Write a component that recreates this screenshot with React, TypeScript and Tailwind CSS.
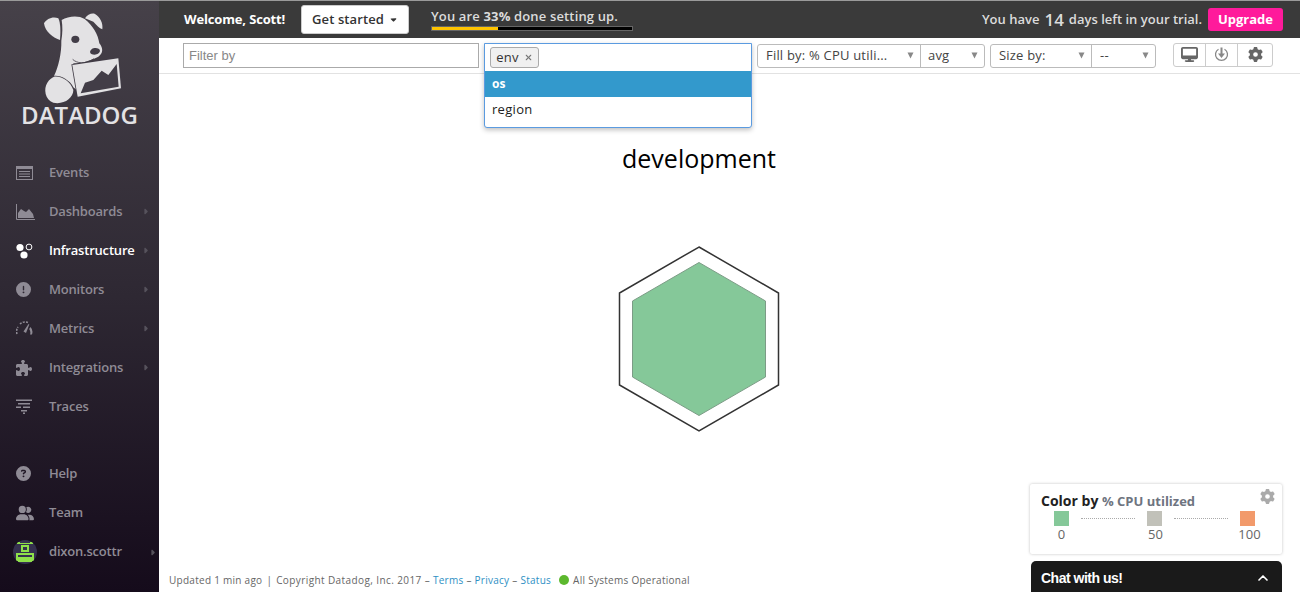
import { ChevronUp } from 'lucide-react'
import {
  FaCircleQuestion,
  FaCircleExclamation,
  FaPuzzlePiece,
  FaUserGroup,
  FaGear,
  FaDesktop,
  FaCaretRight,
  FaCaretDown,
  FaXmark,
} from 'react-icons/fa6'
import type { ReactNode } from 'react'

const sans = "font-['Open_Sans',sans-serif]"

function EventsIcon() {
  return (
    <svg width="17" height="14" viewBox="0 0 17 14">
      <rect x="0.5" y="0.5" width="16" height="13" fill="none" stroke="currentColor" />
      <rect x="0" y="0" width="17" height="3" fill="currentColor" />
      <path d="M3 5.5h11M3 8h11M3 10.5h11" stroke="currentColor" strokeWidth="1" />
    </svg>
  )
}

function DashIcon() {
  return (
    <svg width="19" height="16" viewBox="0 0 19 16">
      <path d="M0.5 0v15.5H19" fill="none" stroke="currentColor" />
      <path d="M2 14V9l3-4 3 2 2 1 3-3 4 5 1 4z" fill="currentColor" />
    </svg>
  )
}

function InfraIcon() {
  return (
    <svg width="17" height="16" viewBox="0 0 17 16">
      <circle cx="4" cy="4.5" r="3.6" fill="currentColor" />
      <circle cx="13" cy="4" r="2.9" fill="none" stroke="currentColor" />
      <circle cx="8" cy="12" r="3.6" fill="currentColor" />
    </svg>
  )
}

function MetricsIcon() {
  return (
    <svg width="17" height="15" viewBox="0 0 17 15">
      <path d="M1 13a7.5 7.5 0 0 1 1-7" fill="none" stroke="currentColor" strokeWidth="1.6" strokeDasharray="2 1.2" />
      <path d="M4 3a7.5 7.5 0 0 1 8-1.5" fill="none" stroke="currentColor" strokeWidth="1.6" strokeDasharray="2 1.2" />
      <path d="M7.500 10.500l5-7.500 0.800 0.500-3.300 8.500z" fill="currentColor" />
      <path d="M14.500 6a7.500 7.500 0 0 1 1.500 7.500h-2a6 6 0 0 0-0.800-5.500z" fill="currentColor" />
    </svg>
  )
}

function TracesIcon() {
  return (
    <svg width="16" height="15" viewBox="0 0 16 15">
      <path d="M0 0.500h16v1.500H0zM2 4h12v1.500H2z" fill="currentColor" />
      <path d="M0 7.500h5v1.500H0zM7 7.500h7v1.500H7zM5 11h6v1.500H5zM7 13.500h2V15H7z" fill="currentColor" />
    </svg>
  )
}

function Avatar() {
  return (
    <div className="w-6 h-6 rounded-full bg-[#35304f] overflow-hidden">
      <svg width="24" height="24" viewBox="0 0 24 24" shapeRendering="crispEdges">
        <path d="M4 2h3v1h10V2h3v2H4z" fill="#8fe04a" />
        <path d="M8 5h8v7H8zM3 13h18v8h-2v1H5v-1H3z" fill="#8fe04a" />
        <rect x="10" y="7" width="4" height="3" fill="#35304f" />
        <rect x="5" y="15" width="14" height="2" fill="#35304f" />
      </svg>
    </div>
  )
}

function DogLogo() {
  const bg = '#423d47'
  const fg = '#e3e2e4'
  return (
    <svg width="85" height="95" viewBox="0 0 255 285">
      {/* ear */}
      <path d="M12 40C20 25 40 18 55 25C62 40 62 65 60 90C40 85 15 65 12 40Z" fill={fg} />
      {/* right ear */}
      <path d="M135 25C142 15 155 8 165 12C180 20 190 40 187 58C178 55 170 45 160 35Z" fill={fg} />
      {/* head and body */}
      <path
        d="M65 30C85 18 115 15 134 27C158 45 175 75 178 100C190 115 190 130 175 140C155 150 130 160 100 160L100 165L110 240L100 232C90 210 60 195 42 198C55 170 65 130 64 92C68 70 68 50 65 30Z"
        fill={fg}
      />
      {/* paw */}
      <path
        d="M42 200C65 197 92 215 100 240C100 265 70 285 40 278C15 270 10 235 22 218C28 208 35 203 42 200Z"
        fill={fg}
      />
      <ellipse cx="106" cy="88" rx="12" ry="11" fill={bg} />
      <ellipse cx="165" cy="124" rx="15" ry="10" transform="rotate(-10 165 124)" fill={bg} />
      <path d="M98 148C110 160 135 164 162 146" fill="none" stroke={bg} strokeWidth="2.500" />
      {/* chart */}
      <path d="M97 165L235 145L243 235L113 260Z" fill={fg} stroke={bg} strokeWidth="5" paintOrder="stroke" />
      <path d="M122 250L135 218L160 210L185 182L205 195L230 162L236 230Z" fill={bg} />
    </svg>
  )
}

const mainNav: { label: string; icon: ReactNode; arrow?: boolean; active?: boolean }[] = [
  { label: 'Events', icon: <EventsIcon /> },
  { label: 'Dashboards', icon: <DashIcon />, arrow: true },
  { label: 'Infrastructure', icon: <InfraIcon />, arrow: true, active: true },
  { label: 'Monitors', icon: <FaCircleExclamation size={15} />, arrow: true },
  { label: 'Metrics', icon: <MetricsIcon />, arrow: true },
  { label: 'Integrations', icon: <FaPuzzlePiece size={16} />, arrow: true },
  { label: 'Traces', icon: <TracesIcon /> },
]

function NavItem({ label, icon, arrow, active }: { label: string; icon: ReactNode; arrow?: boolean; active?: boolean }) {
  return (
    <div className={`h-[39px] flex items-center ${active ? 'text-white' : 'text-[#8f8b95]'}`}>
      <div className={`w-[49px] pl-4 flex items-center ${active ? 'text-white' : 'text-[#8f8b95]'}`}>{icon}</div>
      <span className="text-[13px] font-semibold tracking-[-0.2px]">{label}</span>
      {arrow && <FaCaretRight size={9} className="ml-auto mr-[9px] text-[#56525c]" />}
    </div>
  )
}

function Sidebar() {
  return (
    <aside className={`${sans} w-[159px] shrink-0 h-full flex flex-col bg-gradient-to-b from-[#464149] via-[#2e2833] to-[#150b1b]`}>
      <div className="h-[152px] pt-[9px] shrink-0 flex flex-col">
        <div className="pl-[40px] h-[95px]">
          <DogLogo />
        </div>
        <div className="mt-[-3px] text-center text-[24px] leading-[26px] font-semibold text-[#e3e2e4]">DATADOG</div>
      </div>
      {mainNav.map((n) => (
        <NavItem key={n.label} {...n} />
      ))}
      <div className="h-[28px] shrink-0" />
      <NavItem label="Help" icon={<FaCircleQuestion size={15} />} />
      <NavItem label="Team" icon={<FaUserGroup size={18} />} />
      <div className="h-[39px] flex items-center text-[#8f8b95]">
        <div className="w-[49px] pl-[13px]">
          <Avatar />
        </div>
        <span className="text-[13px] font-semibold tracking-[-0.2px]">dixon.scottr</span>
        <FaCaretRight size={9} className="ml-auto mr-[2px] mt-[2px] text-[#56525c]" />
      </div>
    </aside>
  )
}

function TopBar() {
  return (
    <div className={`${sans} h-[37px] shrink-0 bg-[#3a3a3a] flex items-center pl-[25px] pr-[17px] text-[#dcdcdc]`}>
      <span className="text-[13px] font-bold text-white w-[117px] tracking-[-0.15px] whitespace-nowrap">Welcome, Scott!</span>
      <button className="w-[108px] h-[29px] bg-white rounded-[3px] border border-[#ccc] text-[#333] text-[13px] font-semibold flex items-center justify-center gap-[5px] tracking-[0.1px]">
        Get started
        <FaCaretDown size={9} />
      </button>
      <div className="ml-[22px] w-[202px] flex flex-col mt-[-1px]">
        <span className="text-[13px] leading-[17px] font-semibold whitespace-nowrap tracking-[0.15px]">
          You are <b className="font-bold">33%</b> done setting up.
        </span>
        <div className="h-[5px] bg-black border border-[#666] mt-[1px]">
          <div className="h-full w-[33%] bg-[#ffc400]" />
        </div>
      </div>
      <span className="ml-auto text-[13px] font-semibold whitespace-nowrap flex items-center">
        You have <b className="text-[17px] leading-[17px] font-semibold mx-[5px]">14</b> days left in your trial.
      </span>
      <button className="ml-[6px] w-[75px] h-[23px] rounded-[3px] bg-[#ff1a9b] text-white text-[13px] font-bold">Upgrade</button>
    </div>
  )
}

function SelectCaret() {
  return (
    <svg width="7" height="7" viewBox="0 0 7 7" className="shrink-0">
      <path d="M0.500 0.500h6L3.500 6.500z" fill="#888" />
    </svg>
  )
}

function SelectCell({ label, className }: { label: string; className: string }) {
  return (
    <div className={`h-full flex items-center justify-between text-[13px] tracking-[0.2px] text-[#444] ${className}`}>
      <span className="whitespace-nowrap">{label}</span>
      <SelectCaret />
    </div>
  )
}

function FilterBar() {
  return (
    <div className={`${sans} relative z-10 h-[36px] shrink-0 border-b border-[#e2e2e2] bg-white flex items-center pl-[24px]`}>
      <div className="w-[296px] h-[25px] border border-[#aaa] flex items-center px-[5px] text-[13px] text-[#888] font-['Liberation_Sans',sans-serif]">
        Filter by
      </div>
      <div className="relative ml-[5px] w-[268px] h-[25px] shrink-0">
        <div className="absolute inset-x-0 top-0 h-[85px] bg-white border border-[#5b9be0] rounded-b-[3px] shadow-[0_2px_5px_rgba(0,0,0,0.25)] flex flex-col">
          <div className="h-[27px] flex items-center pl-[5px] shrink-0">
            <div className="h-[21px] w-[49px] border border-[#aaa] bg-[#f0f0f0] rounded-[3px] flex items-center justify-center gap-[5px] text-[13px] tracking-[0.2px] text-[#333]">
              env
              <FaXmark size={9} className="text-[#777]" />
            </div>
          </div>
          <div className="h-[26px] bg-[#3399cc] text-white text-[12px] font-bold flex items-center pl-[7px] shrink-0">os</div>
          <div className="h-[26px] text-[#222] text-[13px] tracking-[0.3px] flex items-center pl-[7px] shrink-0">region</div>
        </div>
      </div>
      <div className="ml-[5px] w-[228px] h-[24px] border border-[#bbb] rounded-[3px] flex items-center shrink-0">
        <SelectCell label="Fill by: % CPU utili..." className="w-[163px] pl-[8px] pr-[6px] border-r border-[#bbb]" />
        <SelectCell label="avg" className="flex-1 pl-[7px] pr-[6px]" />
      </div>
      <div className="ml-[5px] w-[166px] h-[24px] border border-[#bbb] rounded-[3px] flex items-center shrink-0">
        <SelectCell label="Size by:" className="w-[101px] pl-[8px] pr-[6px] border-r border-[#bbb]" />
        <SelectCell label="--" className="flex-1 pl-[8px] pr-[6px]" />
      </div>
      <div className="ml-[17px] w-[100px] h-[24px] border border-[#ccc] rounded-[3px] flex items-center text-[#666] shrink-0 mt-[-2px]">
        <div className="w-[32px] h-full flex items-center justify-center border-r border-[#ccc]">
          <FaDesktop size={17} />
        </div>
        <div className="w-[32px] h-full flex items-center justify-center border-r border-[#ccc] text-[#888]">
          <svg width="15" height="15" viewBox="0 0 15 15">
            <path d="M4.500 2.200a6 6 0 1 0 6 0" fill="none" stroke="currentColor" strokeWidth="1.300" />
            <path d="M6.500 0.500h2v6h2.500l-3.500 4.500-3.500-4.500h2.500z" fill="currentColor" />
          </svg>
        </div>
        <div className="flex-1 flex items-center justify-center">
          <FaGear size={15} />
        </div>
      </div>
    </div>
  )
}

function HostMap() {
  return (
    <div className="flex-1 min-h-0 flex flex-col items-center pr-[61px]">
      <h2 className={`${sans} text-[25px] leading-[34px] mt-[67px] text-black`}>development</h2>
      <svg className="mt-[70px]" width="164" height="188" viewBox="0 0 164 188">
        <polygon points="82,2 161.500,48 161.500,140 82,186 2.500,140 2.500,48" fill="none" stroke="#333" strokeWidth="1.500" />
        <polygon
          points="82,17.500 148.500,56 148.500,132 82,170.500 15.500,132 15.500,56"
          fill="#85c899"
          stroke="#7c9c86"
          strokeWidth="1"
          strokeLinejoin="round"
        />
      </svg>
    </div>
  )
}

function Legend() {
  return (
    <div className={`${sans} absolute right-[18px] bottom-[38px] w-[252px] h-[70px] bg-white rounded-[2px] shadow-[0_0_3px_rgba(0,0,0,0.25)] px-[11px] pt-[8px]`}>
      <div className="text-[14px] leading-[18px] font-bold text-[#222] whitespace-nowrap">
        Color by <span className="text-[13px] text-[#6e7480]">% CPU utilized</span>
      </div>
      <FaGear size={15} className="absolute right-[7px] top-[5px] text-[#aaa]" />
      <div className="flex items-center pl-[13px] w-[217px] mt-[1px]">
        <div className="w-[15px] h-[15px] bg-[#85c899]" />
        <div className="w-[54px] mx-[12px] border-t border-dotted border-[#aaa]" />
        <div className="w-[15px] h-[15px] bg-[#c1c1b9]" />
        <div className="w-[54px] mx-[12px] border-t border-dotted border-[#aaa]" />
        <div className="w-[15px] h-[15px] bg-[#f29a6b]" />
      </div>
      <div className="relative h-[17px] text-[13px] leading-[17px] text-[#666]">
        <span className="absolute left-[13px] w-[15px] flex justify-center">0</span>
        <span className="absolute left-[107px] w-[15px] flex justify-center">50</span>
        <span className="absolute left-[201px] w-[15px] flex justify-center">100</span>
      </div>
    </div>
  )
}

function ChatTab() {
  return (
    <div className="absolute right-[18px] bottom-0 w-[251px] h-[31px] bg-[#1a1a1a] rounded-t-[5px] flex items-center justify-between pl-[10px] pr-[11px] pt-[3px] font-['Liberation_Sans',sans-serif] text-white text-[14px] font-bold tracking-[-0.5px]">
      Chat with us!
      <ChevronUp size={16} strokeWidth={2.500} />
    </div>
  )
}

function Footer() {
  return (
    <div className={`${sans} absolute left-[10px] bottom-[5px] text-[10px] leading-[14px] text-[#666] whitespace-nowrap flex items-center tracking-[0.27px]`}>
      Updated 1 min ago
      <span className="mx-[4px]">|</span>
      <span className="tracking-[0.4px]">Copyright Datadog, Inc. 2017 –</span>&nbsp;
      <span className="text-[#2e8fc4]">Terms</span>&nbsp;–&nbsp;
      <span className="text-[#2e8fc4]">Privacy</span>&nbsp;–&nbsp;
      <span className="text-[#2e8fc4]">Status</span>
      <span className="inline-block w-[10px] h-[10px] rounded-full bg-[#5cb82e] mx-[4px] ml-[8px]" />
      All Systems Operational
    </div>
  )
}

export default function App() {
  return (
    <div className="w-[1300px] h-[592px] overflow-hidden flex bg-white border-t border-[#9a9a9a]">
      <Sidebar />
      <main className="relative flex-1 min-w-0 flex flex-col">
        <TopBar />
        <FilterBar />
        <HostMap />
        <Footer />
        <Legend />
        <ChatTab />
      </main>
    </div>
  )
}
